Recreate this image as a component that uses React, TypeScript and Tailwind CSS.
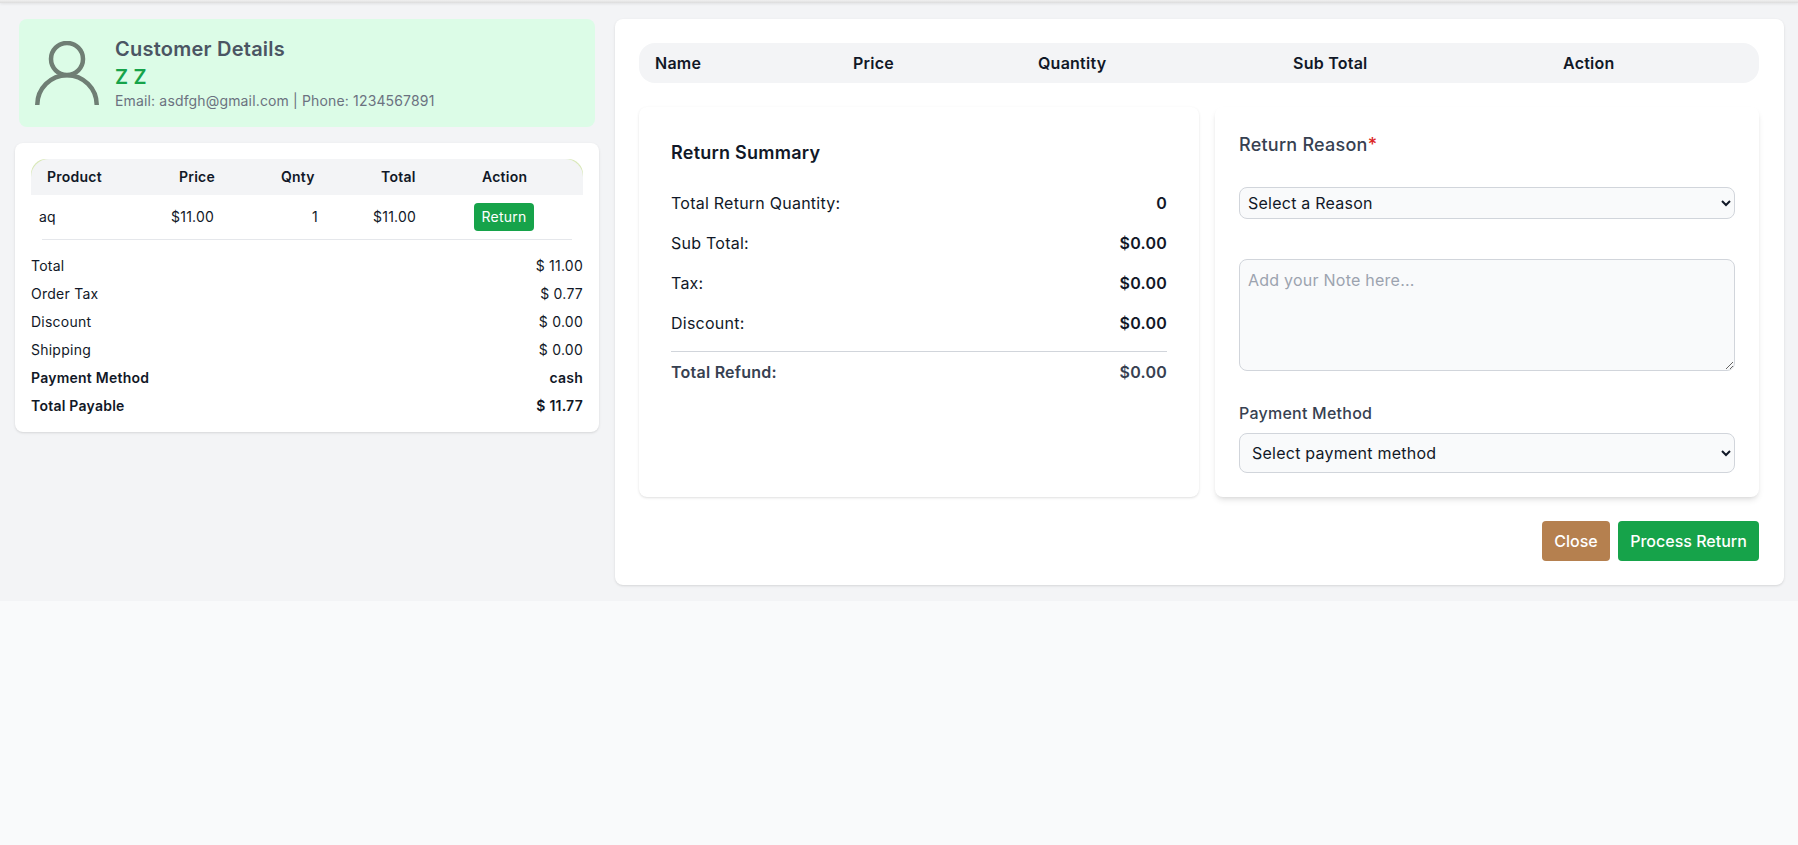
const Row = ({ label, value, bold }: { label: string; value: string; bold?: boolean }) => (
  <div className={`flex justify-between text-sm ${bold ? "font-semibold" : ""}`}>
    <span>{label}</span>
    <span>{value}</span>
  </div>
);

const SumRow = ({ label, value }: { label: string; value: string }) => (
  <div className="flex justify-between text-base">
    <span>{label}:</span>
    <span className="font-semibold">{value}</span>
  </div>
);

export default function App() {
  return (
    <div className="min-h-screen bg-[#f9fafb] text-[#111827] font-['Inter',sans-serif] tracking-[0.015em]">
      <div className="h-[601px] bg-[#f3f4f6]">
        <div className="h-[3px] bg-linear-to-b from-[#f0f0f0] to-[#dcdcdc] shadow-[0_1px_3px_rgba(0,0,0,0.08)]" />
        <div className="flex items-start gap-4 pl-[15px] pr-[14px] pt-4">
          <div className="w-[584px] shrink-0 flex flex-col gap-4">
            <div className="mx-1 h-[108px] rounded-lg bg-[#dcfce7] flex items-center gap-4 pl-4">
              <svg className="w-16 h-16 text-[#6f7e74] shrink-0" viewBox="0 0 64 64" fill="none" stroke="currentColor" strokeWidth="4.5">
                <circle cx="32" cy="18" r="16" />
                <path d="M2.25 64 A29.75 29.75 0 0 1 61.75 64" />
              </svg>
              <div className="flex flex-col">
                <div className="text-xl font-semibold text-[#4b5563] leading-7">Customer Details</div>
                <div className="text-xl font-semibold text-[#16a34a] leading-7">Z Z</div>
                <div className="text-sm text-[#6b7280] leading-5 tracking-[0.011em]">Email: asdfgh@gmail.com | Phone: 1234567891</div>
              </div>
            </div>
            <div className="rounded-lg bg-white shadow p-4">
              <div className="h-9 rounded-t-[15px] bg-[#d9e8b8] overflow-hidden">
                <div className="h-9 rounded-t-[18px] bg-[#f3f4f6] grid grid-cols-[132px_102px_100px_101px_1fr] items-center text-sm font-semibold pl-4">
                  <span>Product</span>
                  <span>Price</span>
                  <span>Qnty</span>
                  <span>Total</span>
                  <span>Action</span>
                </div>
              </div>
              <div className="h-11 grid grid-cols-[132px_110px_37px_156px_1fr] items-center text-sm pl-2">
                <span>aq</span>
                <span>$11.00</span>
                <span className="text-right">1</span>
                <span className="pl-[55px]">$11.00</span>
                <span>
                  <button className="h-7 w-[60px] rounded bg-[#16a34a] text-white text-sm">Return</button>
                </span>
              </div>
              <div className="mx-[11px] h-px bg-[#e5e7eb]" />
              <div className="mt-4 flex flex-col gap-2">
                <Row label="Total" value="$ 11.00" />
                <Row label="Order Tax" value="$ 0.77" />
                <Row label="Discount" value="$ 0.00" />
                <Row label="Shipping" value="$ 0.00" />
                <Row label="Payment Method" value="cash" bold />
                <Row label="Total Payable" value="$ 11.77" bold />
              </div>
            </div>
          </div>
          <div className="flex-1 rounded-lg bg-white shadow py-6 pl-6 pr-[25px] h-[566px]">
            <div className="h-10 rounded-2xl bg-[#f3f4f6] grid grid-cols-[198px_185px_255px_270px_1fr] items-center text-base font-semibold pl-4">
              <span>Name</span>
              <span>Price</span>
              <span>Quantity</span>
              <span>Sub Total</span>
              <span>Action</span>
            </div>
            <div className="mt-6 flex gap-4 h-[390px]">
              <div className="w-[560px] rounded-lg bg-white shadow-sm p-8">
                <div className="text-lg font-semibold leading-7">Return Summary</div>
                <div className="mt-6 flex flex-col gap-4">
                  <SumRow label="Total Return Quantity" value="0" />
                  <SumRow label="Sub Total" value="$0.00" />
                  <SumRow label="Tax" value="$0.00" />
                  <SumRow label="Discount" value="$0.00" />
                </div>
                <div className="mt-4 border-t border-[#d1d5db] pt-2 flex justify-between text-base font-semibold text-[#374151]">
                  <span>Total Refund:</span>
                  <span>$0.00</span>
                </div>
              </div>
              <div className="flex-1 rounded-lg bg-white shadow-md p-6">
                <div className="text-lg font-medium text-[#374151] leading-7">
                  Return Reason<span className="text-[#dc2626]">*</span>
                </div>
                <select className="mt-7 block w-full h-8 rounded-lg border border-[#d1d5db] bg-[#f9fafb] px-1 text-base">
                  <option>Select a Reason</option>
                </select>
                <textarea
                  className="mt-10 block w-full h-28 rounded-lg border border-[#d1d5db] bg-[#f9fafb] p-2 text-base placeholder:text-[#9ca3af]"
                  placeholder="Add your Note here..."
                />
                <div className="mt-[30px] text-base font-medium text-[#374151] leading-6">Payment Method</div>
                <select className="mt-2 block w-full h-10 rounded-lg border border-[#d1d5db] bg-[#f9fafb] px-2 text-base">
                  <option>Select payment method</option>
                </select>
              </div>
            </div>
            <div className="mt-6 flex justify-end gap-2">
              <button className="h-10 w-[68px] rounded bg-[#b5804f] text-white text-base font-medium tracking-normal">Close</button>
              <button className="h-10 w-[141px] rounded bg-[#16a34a] text-white text-base font-medium tracking-normal">Process Return</button>
            </div>
          </div>
        </div>
      </div>
    </div>
  );
}
